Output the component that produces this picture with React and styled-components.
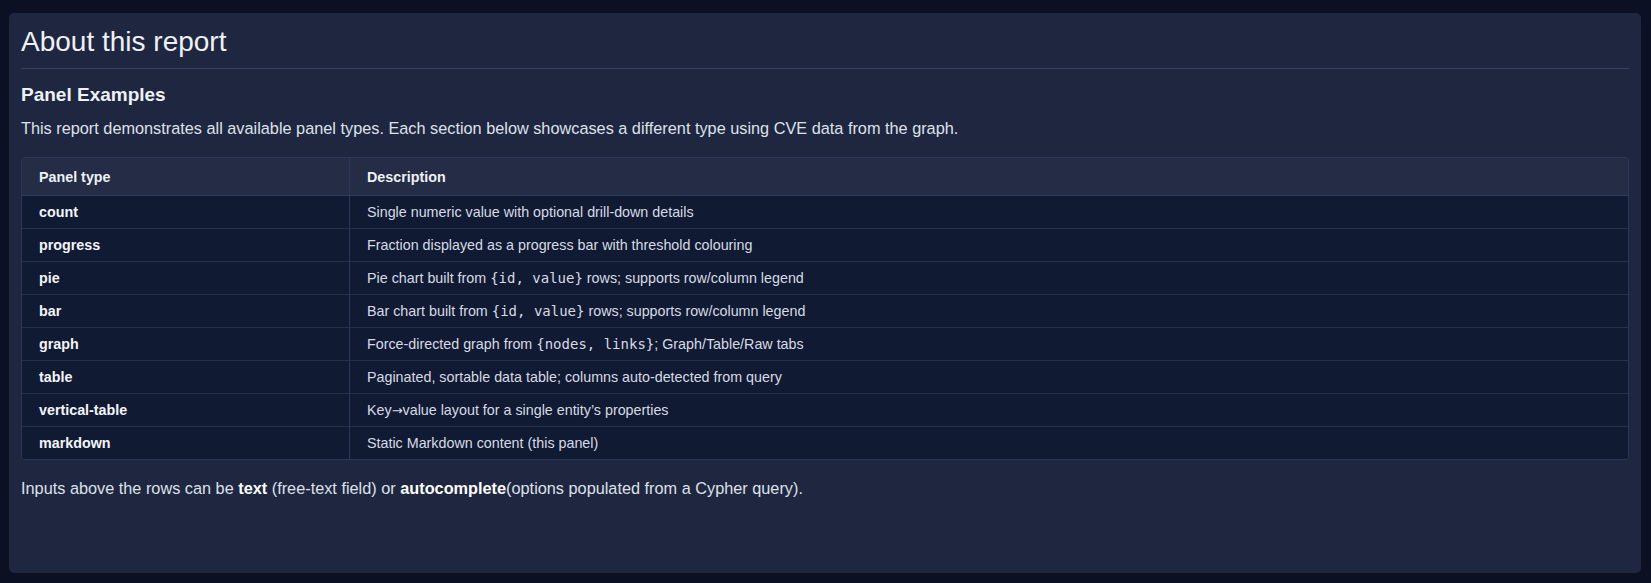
import React from 'react';
import styled, { createGlobalStyle } from 'styled-components';

const GlobalStyle = createGlobalStyle`
  html, body {
    margin: 0;
    padding: 0;
    background: #0b1022;
  }
  body {
    font-family: "Liberation Sans", Arial, sans-serif;
    color: #e3e7f0;
  }
`;

const Page = styled.div`
  padding: 13px 10px 10px 9px;
  min-height: 583px;
  box-sizing: border-box;
`;

const Panel = styled.section`
  background: #1f2640;
  border-radius: 5px;
  padding: 12px 12px 0 12px;
  height: 560px;
  box-sizing: border-box;
`;

const Title = styled.h1`
  margin: 0;
  font-size: 28px;
  font-weight: 400;
  line-height: 34px;
  color: #eef1f7;
  padding-bottom: 9px;
  border-bottom: 1px solid #33406a;
`;

const Heading = styled.h2`
  margin: 14px 0 0;
  font-size: 19px;
  font-weight: 700;
  line-height: 23px;
  color: #eef1f7;
`;

const Para = styled.p`
  margin: ${(p) => p.$top || '11px'} 0 0;
  font-size: 16.3px;
  line-height: 22px;
  color: #dde1ea;

  b {
    color: #ffffff;
    font-weight: 700;
  }
`;

const TableWrap = styled.div`
  margin-top: 18px;
  border: 1px solid #2c3757;
  border-radius: 4px;
  overflow: hidden;
`;

const Table = styled.table`
  width: 100%;
  border-collapse: collapse;
  font-size: 14.3px;
`;

const HeadCell = styled.th`
  text-align: left;
  font-weight: 700;
  color: #eef1f7;
  background: #252c46;
  height: 37px;
  padding: 0 17px;
  border-bottom: 1px solid #2f3a5c;
  border-right: ${(p) => (p.$last ? 'none' : '1px solid #2c3757')};
  width: ${(p) => p.$w || 'auto'};
`;

const Row = styled.tr`
  background: #111a33;
  & + & td {
    border-top: 1px solid #26304e;
  }
`;

const Cell = styled.td`
  height: 32px;
  padding: 0 17px;
  color: ${(p) => (p.$strong ? '#f3f5fa' : '#d6dae5')};
  font-weight: ${(p) => (p.$strong ? 700 : 400)};
  border-right: ${(p) => (p.$last ? 'none' : '1px solid #2c3757')};
`;

const Code = styled.code`
  font-family: "DejaVu Sans Mono", "Liberation Mono", monospace;
  font-size: 14px;
  color: #d6dae5;
`;

const Arrow = styled.span`
  font-family: "DejaVu Sans", sans-serif;
  font-size: 13px;
`;

const rows = [
  ['count', 'Single numeric value with optional drill-down details'],
  ['progress', 'Fraction displayed as a progress bar with threshold colouring'],
  ['pie', <>Pie chart built from <Code>{'{id, value}'}</Code> rows; supports row/column legend</>],
  ['bar', <>Bar chart built from <Code>{'{id, value}'}</Code> rows; supports row/column legend</>],
  ['graph', <>Force-directed graph from <Code>{'{nodes, links}'}</Code>; Graph/Table/Raw tabs</>],
  ['table', 'Paginated, sortable data table; columns auto-detected from query'],
  ['vertical-table', <>Key<Arrow>→</Arrow>value layout for a single entity’s properties</>],
  ['markdown', 'Static Markdown content (this panel)'],
];

export default function App() {
  return (
    <Page>
      <GlobalStyle />
      <Panel>
        <Title>About this report</Title>
        <Heading>Panel Examples</Heading>
        <Para>
          This report demonstrates all available panel types. Each section below showcases a different type using CVE data from the graph.
        </Para>
        <TableWrap>
          <Table>
            <thead>
              <tr>
                <HeadCell $w="293px">Panel type</HeadCell>
                <HeadCell $last>Description</HeadCell>
              </tr>
            </thead>
            <tbody>
              {rows.map(([type, desc]) => (
                <Row key={type}>
                  <Cell $strong>{type}</Cell>
                  <Cell $last>{desc}</Cell>
                </Row>
              ))}
            </tbody>
          </Table>
        </TableWrap>
        <Para $top="17px">
          Inputs above the rows can be <b>text</b> (free-text field) or <b>autocomplete</b>(options populated from a Cypher query).
        </Para>
      </Panel>
    </Page>
  );
}
